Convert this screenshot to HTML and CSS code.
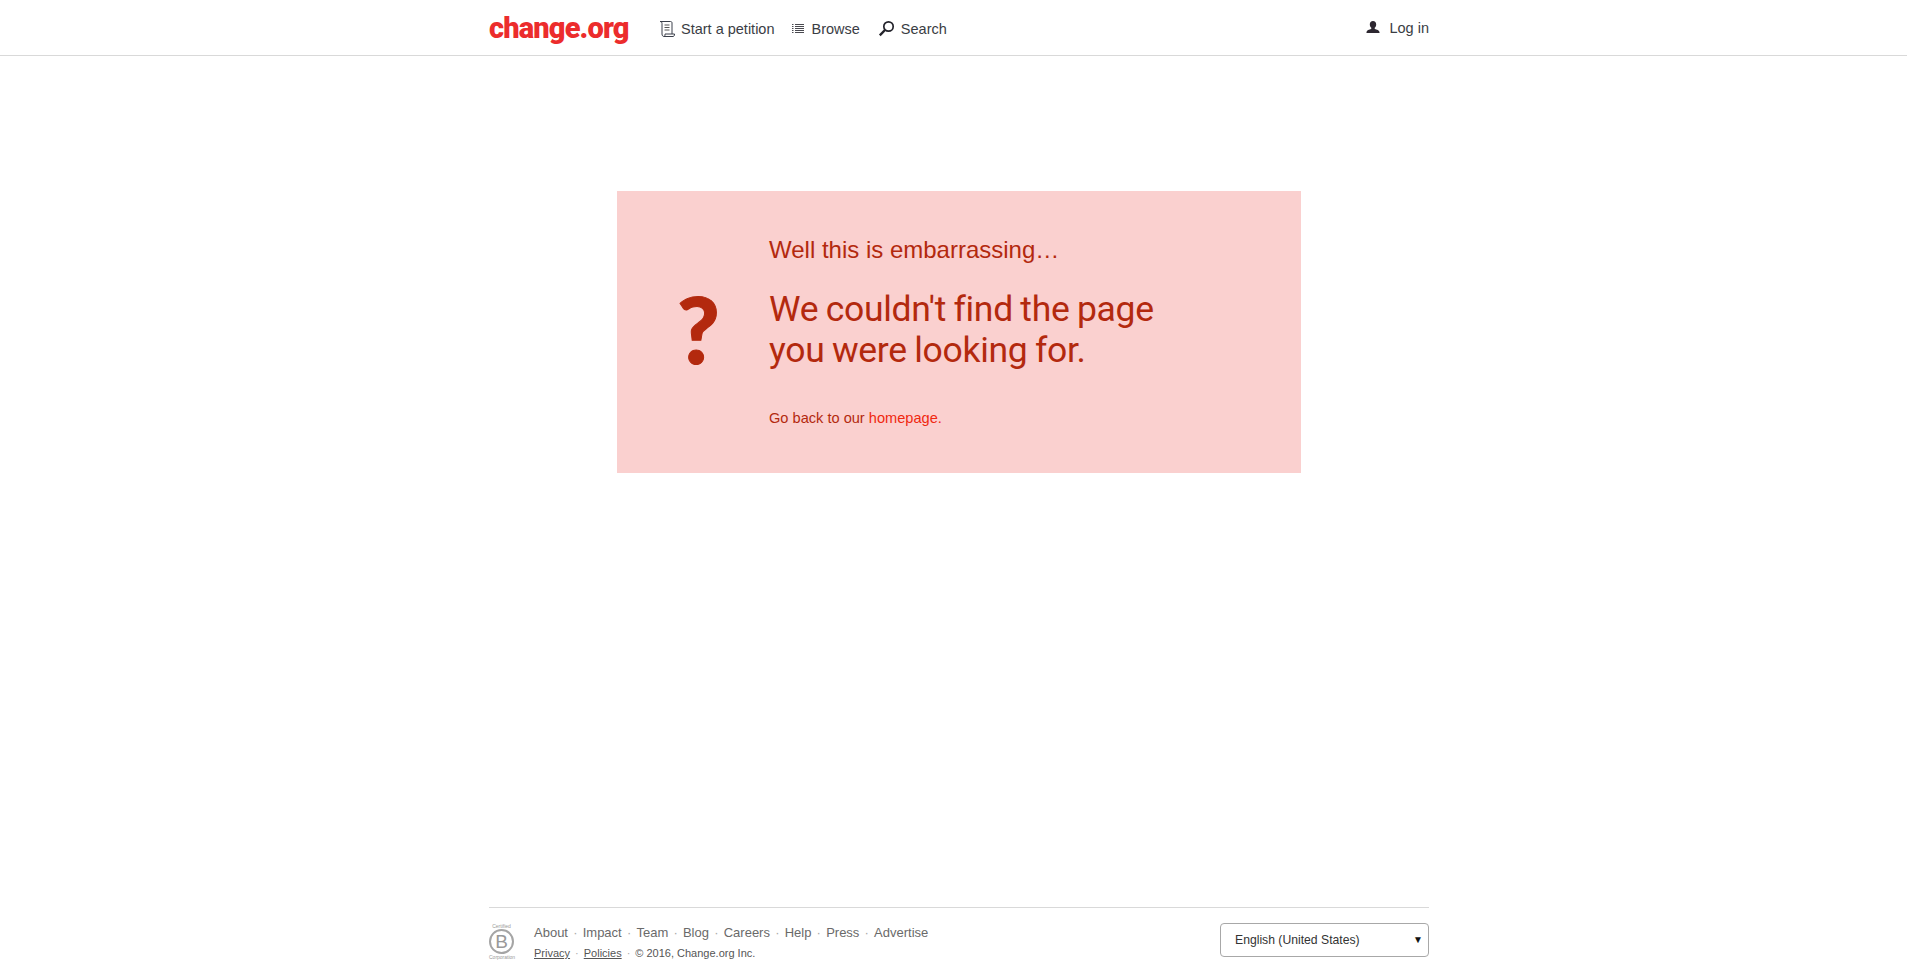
FILE: index.html
```html
<!DOCTYPE html>
<html lang="en">
<head>
<meta charset="utf-8">
<title>Change.org</title>
<link rel="stylesheet" href="styles.css">
</head>
<body>
<header class="topbar">
  <div class="wrap topbar-inner">
    <a class="logo" href="#">change.org</a>
    <nav class="nav">
      <a class="nav-item nav-start" href="#">
        <svg class="ico" width="16" height="18" viewBox="0 0 16 18" fill="none" stroke="#3a3f4a" stroke-width="1"><path d="M1 1.500h10.500c1 0 1.500.6 1.500 1.500v11"/><path d="M1 1.500c1.300 0 2 .8 2 2V14c0 1.500.8 2.500 2 2.500h9c1 0 1.500-1 1.500-2.500H6c0 1 0 2.500-1 2.500"/><path d="M5.500 5h5M5.500 7.500h5M5.500 10h5" stroke="#555"/></svg>
        <span>Start a petition</span>
      </a>
      <a class="nav-item nav-browse" href="#">
        <svg class="ico" width="12" height="12" viewBox="0 0 12 12" stroke="#4a4a50" stroke-width="1"><path d="M0 1.500h1.500M3 1.500h9M0 3.500h1.500M3 3.500h9M0 5.500h1.500M3 5.500h9M0 7.500h1.500M3 7.500h9M0 9.500h1.500M3 9.500h9"/></svg>
        <span>Browse</span>
      </a>
      <a class="nav-item nav-search" href="#">
        <svg class="ico" width="17" height="17" viewBox="0 0 17 17" fill="none" stroke="#23232b"><circle cx="10.500" cy="6.500" r="4.700" stroke-width="1.700"/><path d="M7 10l-5.200 5.400" stroke-width="2.400"/></svg>
        <span>Search</span>
      </a>
    </nav>
    <a class="nav-item nav-login" href="#">
      <svg class="ico" width="14" height="13" viewBox="0 0 14 13" fill="#2d2730"><path d="M7 0c2 0 3.200 1.500 3.200 3.500 0 1.400-.7 2.700-1.500 3.300v1c.6.700 4.100.9 4.800 3.200v1H.5v-1c.7-2.300 4.200-2.500 4.800-3.200v-1C4.500 6.200 3.800 4.900 3.800 3.500 3.800 1.500 5 0 7 0z"/></svg>
      <span>Log in</span>
    </a>
  </div>
</header>

<main class="main">
  <section class="notice">
    <div class="notice-mark">?</div>
    <div class="notice-body">
      <p class="notice-lead">Well this is embarrassing…</p>
      <h1 class="notice-title">We couldn't find the page<br>you were looking for.</h1>
      <p class="notice-back">Go back to our <a href="#">homepage.</a></p>
    </div>
  </section>
</main>

<footer class="wrap footer">
  <div class="bcorp">
    <span class="bcorp-small">Certified</span>
    <span class="bcorp-ring">B</span>
    <span class="bcorp-small">Corporation</span>
  </div>
  <div class="footer-links">
    <div class="links-main">
      <a href="#">About</a><i>·</i><a href="#">Impact</a><i>·</i><a href="#">Team</a><i>·</i><a href="#">Blog</a><i>·</i><a href="#">Careers</a><i>·</i><a href="#">Help</a><i>·</i><a href="#">Press</a><i>·</i><a href="#">Advertise</a>
    </div>
    <div class="links-legal">
      <a href="#">Privacy</a><i>·</i><a href="#">Policies</a><i>·</i><span>© 2016, Change.org Inc.</span>
    </div>
  </div>
  <div class="lang">
    <select class="lang-select"><option>English (United States)</option></select>
    <span class="lang-arrow">▼</span>
  </div>
</footer>
</body>
</html>
```
FILE: styles.css
```css
* { box-sizing: border-box; }
html, body { height: 100%; }
body {
  margin: 0;
  padding-left: 11px;
  min-height: 979px;
  height: 979px;
  display: flex;
  flex-direction: column;
  background: #fff;
  color: #333;
  font-family: "Liberation Sans", Arial, sans-serif;
  overflow: hidden;
}
a { color: inherit; text-decoration: none; }
.wrap { width: 940px; margin: 0 auto; }

.topbar { height: 56px; border-bottom: 1px solid #d9d9d9; margin-left: -11px; padding-left: 11px; }
.topbar-inner { height: 55px; display: flex; align-items: center; }
.logo {
  width: 170px;
  font-family: Roboto, sans-serif;
  font-weight: 900;
  font-size: 29px;
  letter-spacing: -0.85px;
  color: #ec2c2c;
}
.nav { display: flex; align-items: center; flex: 1; padding-top: 2px; }
.nav-item { display: flex; align-items: center; font-size: 14.5px; color: #3a3d44; }
.ico { flex: none; }
.nav-start .ico { margin-right: 6px; }
.nav-browse { margin-left: 17px; }
.nav-browse .ico { margin-right: 8px; }
.nav-search { margin-left: 18px; }
.nav-search .ico { margin-right: 6px; }
.nav-login .ico { margin-right: 9px; }

.main { flex: 1; padding-top: 135px; }
.notice {
  width: 684px;
  height: 282px;
  margin: 0 auto;
  background: #fad0cf;
  color: #b3290e;
  display: flex;
}
.notice-mark {
  width: 152px;
  padding: 88px 0 0 60px;
  font-family: Lato, sans-serif;
  font-weight: 900;
  font-size: 92px;
  line-height: 100px;
  -webkit-text-stroke: 1px #b3290e;
}
.notice-body { padding-top: 45px; }
.notice-lead { margin: 0; font-size: 24px; line-height: 28px; }
.notice-title {
  margin: 25px 0 0;
  font-family: Roboto, sans-serif;
  font-weight: 400;
  font-size: 35.5px;
  letter-spacing: -0.3px;
  word-spacing: -1px;
  line-height: 41px;
}
.notice-back { margin: 37px 0 0; font-size: 14.6px; line-height: 20px; }
.notice-back a { color: #f0280f; }

.footer {
  height: 72px;
  border-top: 1px solid #d9d9d9;
  display: flex;
  align-items: flex-start;
}
.bcorp {
  width: 45px;
  padding-top: 15px;
  display: flex;
  flex-direction: column;
  align-items: flex-start;
  color: #999;
}
.bcorp-small { font-size: 5px; line-height: 6px; width: 25px; text-align: center; white-space: nowrap; }
.bcorp-ring {
  width: 25px;
  height: 25px;
  border: 2px solid #a5a5a5;
  border-radius: 50%;
  font-size: 19px;
  line-height: 21px;
  text-align: center;
}
.footer-links { flex: 1; padding-top: 16px; }
.links-main { font-size: 13px; line-height: 18px; color: #6a6a6a; display: flex; }
.links-main i { font-style: normal; color: #aaa; margin: 0 5.2px; }
.links-legal { margin-top: 3px; font-size: 11px; line-height: 16px; color: #555; display: flex; }
.links-legal a { text-decoration: underline; }
.links-legal i { font-style: normal; color: #aaa; margin: 0 5px; }
.lang { position: relative; width: 209px; margin-top: 15px; }
.lang-select {
  appearance: none;
  width: 100%;
  height: 34px;
  padding: 0 14px;
  border: 1px solid #a8a8a8;
  border-radius: 4px;
  background: #fff;
  color: #333;
  font-family: "Liberation Sans", Arial, sans-serif;
  font-size: 12.2px;
}
.lang-arrow {
  position: absolute;
  right: 6px;
  top: 11px;
  font-size: 10px;
  line-height: 12px;
  color: #111;
  pointer-events: none;
}
```
